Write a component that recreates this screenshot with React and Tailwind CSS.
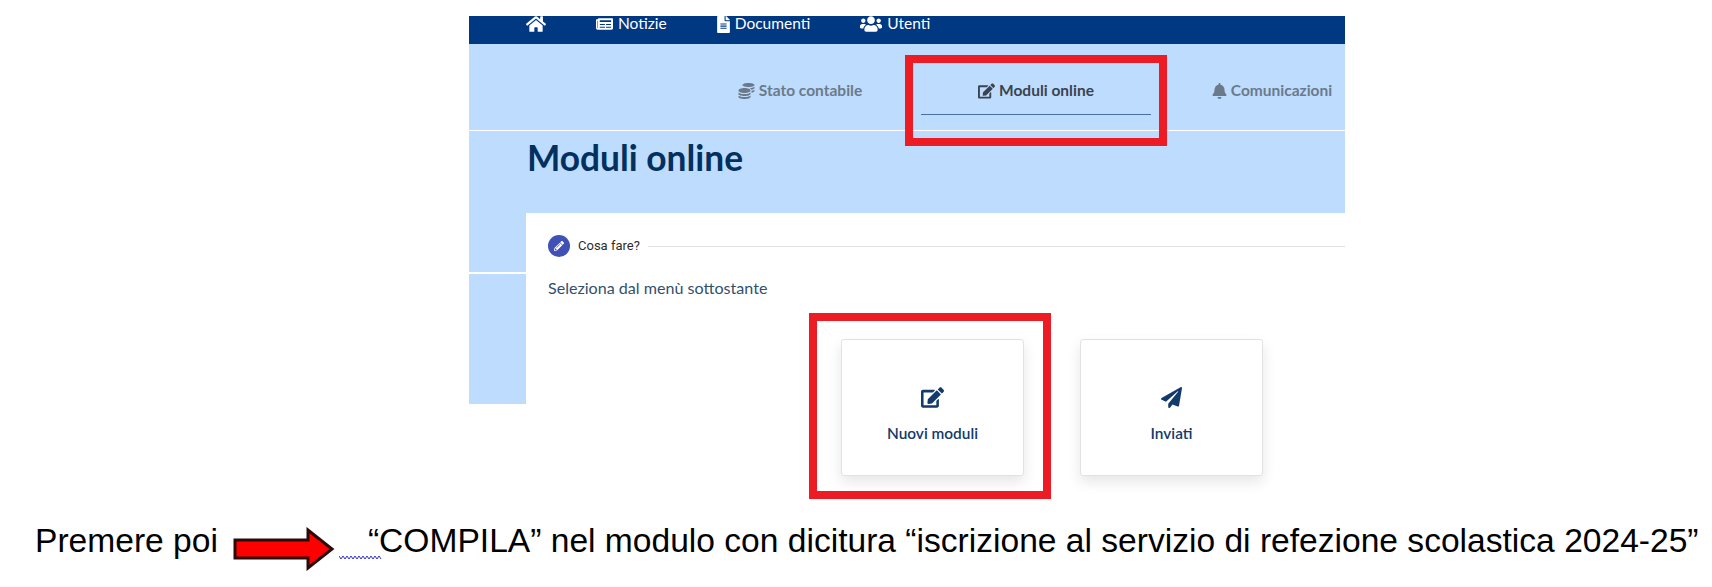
import { FaHome, FaNewspaper, FaFileAlt, FaUsers, FaCoins, FaBell, FaPaperPlane, FaPencilAlt, FaEdit } from "react-icons/fa";

const NavLink = ({ icon, label, className }) => (
    <div className={`flex items-center gap-[5px] ${className}`}>
        {icon}
        <span>{label}</span>
    </div>
)

const Tab = ({ icon, label, active }) => (
    <div className={`relative flex w-[236px] shrink-0 flex-col items-center ${active ? 'text-[#3a4350]' : 'text-[#6b7a8a]'}`}>
        <div className="flex h-[70px] w-[230px] items-center justify-center gap-[4px] pt-[28px] pb-[4px] text-[15.5px] font-bold">
            {icon}
            <span>{label}</span>
        </div>
        {active && <div className="h-px w-[230px] bg-[#4a6fa5]"></div>}
        {active && <div className="pointer-events-none absolute -left-[13px] top-[11px] h-[91px] w-[262px] border-[8px] border-[#ed1c24]"></div>}
    </div>
)

const Card = ({ icon, label, children }) => (
    <div className="relative flex h-[137px] w-[183px] flex-col items-center justify-center gap-[14px] rounded-[3px] border border-[#e2e2e2] bg-white pt-[18px] text-[#123a6b] shadow-[0_6px_14px_rgba(0,0,0,0.10)]">
        {icon}
        <span className="text-[15.4px] font-semibold">{label}</span>
        {children}
    </div>
)

export default function App() {
    return (
        <div className="h-[587px] w-[1712px] overflow-hidden bg-white pt-[16px] font-['Lato',sans-serif]">
            <div className="ml-[469px] w-[876px]">
                <nav className="flex h-[28px] items-center bg-[#003882] pb-[12px] pl-[57px] text-[15.5px] text-white">
                    <FaHome className="h-[18px] w-[20px]" />
                    <NavLink className="ml-[50px]" icon={<FaNewspaper className="h-[16px] w-[17px]" />} label="Notizie" />
                    <NavLink className="ml-[50px]" icon={<FaFileAlt className="h-[17px] w-[13px]" />} label="Documenti" />
                    <NavLink className="ml-[50px]" icon={<FaUsers className="h-[18px] w-[22px]" />} label="Utenti" />
                </nav>

                <div className="flex h-[87px] border-b-[1.5px] border-white bg-[#bedcfd] pl-[213px]">
                    <Tab icon={<FaCoins className="h-[16px] w-[17px]" />} label="Stato contabile" />
                    <Tab active icon={<FaEdit className="h-[16px] w-[17px]" />} label="Moduli online" />
                    <Tab icon={<FaBell className="h-[16px] w-[15px]" />} label="Comunicazioni" />
                </div>

                <div className="h-[82px] bg-[#bedcfd] pl-[58px] pt-[7px]">
                    <h1 className="text-[35.3px] font-bold leading-[40px] text-[#03305f]">Moduli online</h1>
                </div>

                <div className="flex">
                    <div className="flex w-[57px] flex-col">
                        <div className="h-[59px] bg-[#bedcfd]"></div>
                        <div className="mt-[2px] h-[130px] bg-[#bedcfd]"></div>
                    </div>

                    <div className="flex-1 bg-white pl-[22px] pt-[22px]">
                        <div className="flex items-center">
                            <div className="flex h-[22px] w-[22px] items-center justify-center rounded-full bg-[#3f51b5]">
                                <FaPencilAlt className="h-[10px] w-[10px] text-white" />
                            </div>
                            <span className="ml-[8px] font-['Roboto',sans-serif] text-[13px] text-[#2c2c2c]">Cosa fare?</span>
                            <div className="ml-[8px] h-px flex-1 bg-[#e0e0e0]"></div>
                        </div>
                        <p className="mt-[20px] text-[16.1px] leading-[22px] text-[#33506b]">Seleziona dal menù sottostante</p>
                        <div className="ml-[293px] mt-[40px] flex gap-[56px]">
                            <Card icon={<FaEdit className="h-[21px] w-[23px]" />} label="Nuovi moduli">
                                <div className="pointer-events-none absolute -left-[33px] -top-[27px] h-[186px] w-[242px] border-[8px] border-[#ed1c24]"></div>
                            </Card>
                            <Card icon={<FaPaperPlane className="h-[21px] w-[21px]" />} label="Inviati" />
                        </div>
                    </div>
                </div>
            </div>

            <div className="relative mt-[35px] flex items-center pl-[35px] font-['Liberation_Sans',sans-serif] text-[33.6px] leading-[36px] text-black">
                <span>Premere poi</span>
                <svg className="ml-[15px] mr-[33px] mt-[16px] h-[44px] w-[102px] shrink-0 blur-[0.5px]" viewBox="0 0 102 44">
                    <path d="M2 13 H75 V3 L99 22 L75 41 V31 H2 Z" fill="#ff0000" stroke="#2b0a0a" strokeWidth="3" strokeLinejoin="miter" />
                </svg>
                <span className="whitespace-nowrap">“COMPILA” nel modulo con dicitura “iscrizione al servizio di refezione scolastica 2024-25”</span>
                <svg className="absolute left-[339px] top-[44px] h-[5px] w-[43px]" viewBox="0 0 43 5">
                    <path d="M0 1 L2 4 L4 1 L6 4 L8 1 L10 4 L12 1 L14 4 L16 1 L18 4 L20 1 L22 4 L24 1 L26 4 L28 1 L30 4 L32 1 L34 4 L36 1 L38 4 L40 1 L42 4" fill="none" stroke="#3333cc" strokeWidth="1" />
                </svg>
            </div>
        </div>
    )
}
